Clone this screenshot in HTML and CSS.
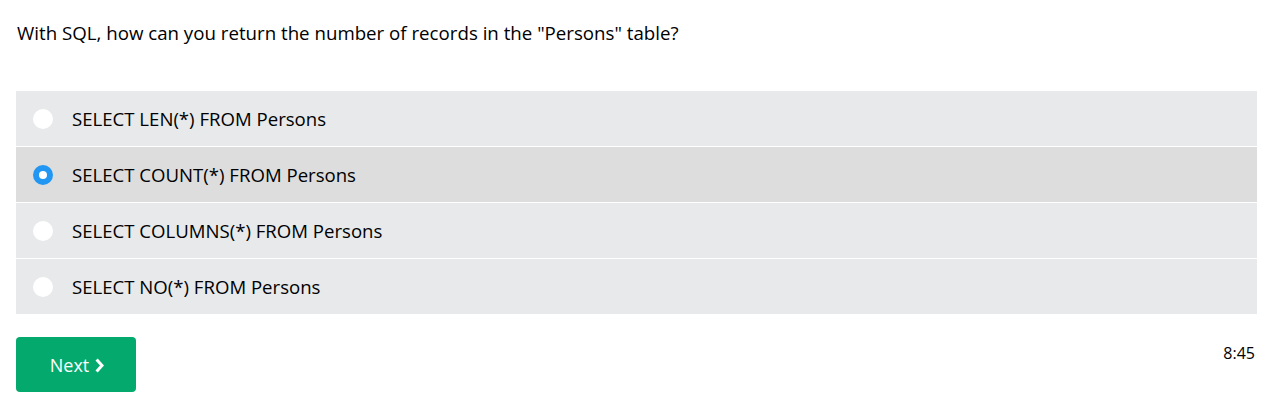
FILE: index.html
```html
<!DOCTYPE html>
<html>
<head>
<meta charset="utf-8">
<link rel="stylesheet" href="styles.css">
</head>
<body>
<div class="quiz">
  <p class="question">With SQL, how can you return the number of records in the "Persons" table?</p>
  <div class="options">
    <label class="option"><span class="radio"></span><span class="opt-text">SELECT LEN(*) FROM Persons</span></label>
    <label class="option selected"><span class="radio checked"></span><span class="opt-text">SELECT COUNT(*) FROM Persons</span></label>
    <label class="option"><span class="radio"></span><span class="opt-text">SELECT COLUMNS(*) FROM Persons</span></label>
    <label class="option"><span class="radio"></span><span class="opt-text">SELECT NO(*) FROM Persons</span></label>
  </div>
  <div class="footer">
    <button class="next">Next<svg class="chev" width="9" height="15" viewBox="0 0 9 15"><path d="M1.6 1.6 L7 7.5 L1.6 13.4" fill="none" stroke="#fff" stroke-width="3" stroke-linejoin="miter"/></svg></button>
    <span class="timer">8:45</span>
  </div>
</div>
</body>
</html>
```
FILE: styles.css
```css
html, body {
  margin: 0;
  padding: 0;
  background: #fff;
}
body {
  font-family: "Open Sans", "Noto Sans", sans-serif;
  color: #000;
}
.quiz {
  padding: 0 19px 0 16px;
}
.question {
  margin: 0;
  padding-top: 20px;
  height: 91px;
  box-sizing: border-box;
  font-size: 18.7px;
  line-height: 26px;
  padding-left: 1px;
}
.options {
  display: flex;
  flex-direction: column;
  gap: 1px;
}
.option {
  display: flex;
  align-items: center;
  height: 55px;
  background: #E7E9EB;
  padding-left: 17px;
}
.option.selected {
  background: #DDDDDD;
}
.radio {
  width: 20px;
  height: 20px;
  border-radius: 50%;
  background: #fff;
  box-sizing: border-box;
  flex: none;
}
.radio.checked {
  background: #fff;
  border: 6.5px solid #2196F3;
}
.opt-text {
  margin-left: 19px;
  font-size: 18.6px;
}
.footer {
  display: flex;
  justify-content: space-between;
  align-items: flex-start;
  padding-top: 23px;
}
.next {
  display: flex;
  align-items: center;
  justify-content: center;
  gap: 6px;
  width: 120px;
  height: 55px;
  border: none;
  border-radius: 4px;
  background: #04AA6D;
  color: #fff;
  font-family: inherit;
  font-size: 18px;
  padding: 0 0 0 2px;
  cursor: pointer;
}
.chev {
  display: block;
  margin-top: 1px;
}
.timer {
  font-size: 16px;
  margin-top: 5px;
  margin-right: 2px;
}
```
